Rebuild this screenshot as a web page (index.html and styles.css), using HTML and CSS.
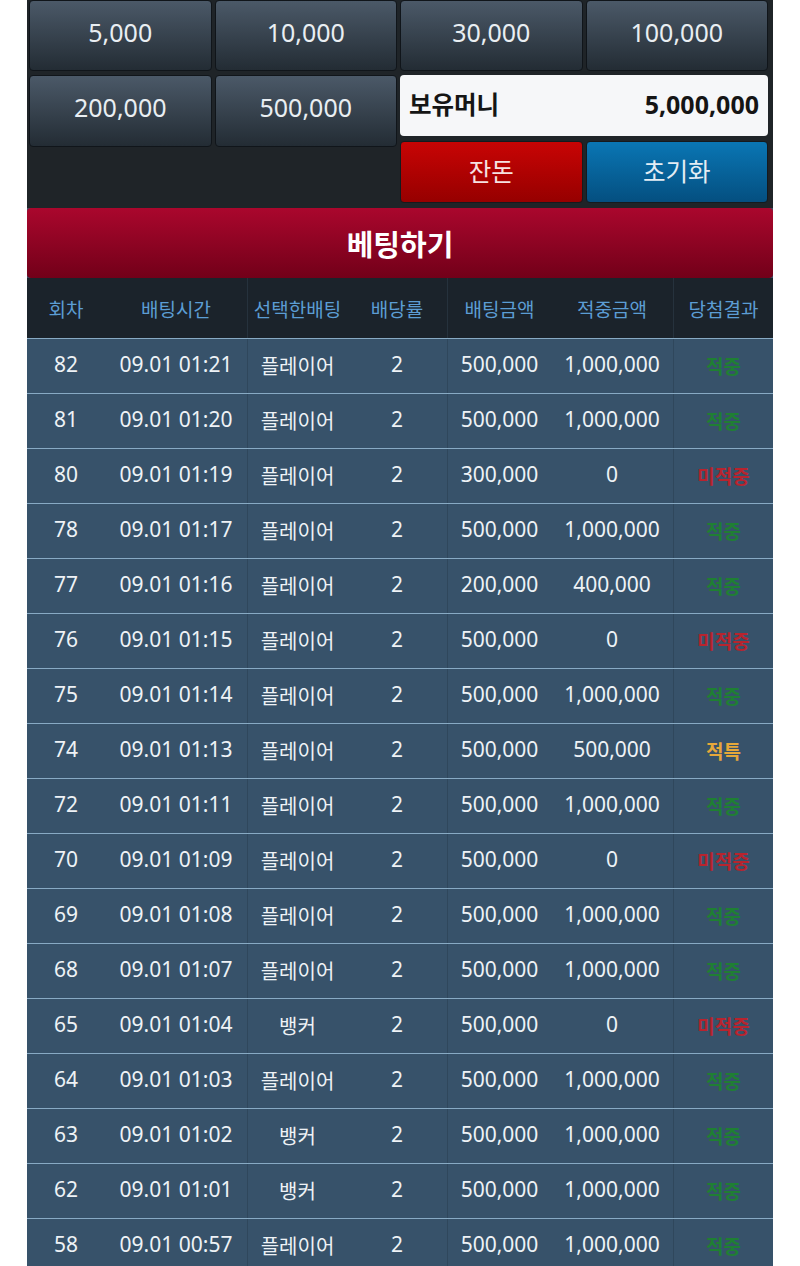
FILE: index.html
```html
<!DOCTYPE html>
<html lang="ko">
<head>
<meta charset="utf-8">
<title>베팅</title>
<link rel="stylesheet" href="styles.css">
</head>
<body>
<div class="wrap">
  <div class="panel">
    <div class="chip">5,000</div>
    <div class="chip">10,000</div>
    <div class="chip">30,000</div>
    <div class="chip">100,000</div>
    <div class="chip tall">200,000</div>
    <div class="chip tall">500,000</div>
    <div class="side">
      <div class="money"><span class="mk">보유머니</span><span class="mv">5,000,000</span></div>
      <div class="act red">잔돈</div>
      <div class="act blue">초기화</div>
    </div>
  </div>
  <div class="bet">베팅하기</div>
  <div class="table">
    <div class="head">
      <div>회차</div><div>배팅시간</div><div class="sep">선택한배팅</div><div>배당률</div><div class="sep">배팅금액</div><div>적중금액</div><div class="sep">당첨결과</div>
    </div>
    <div class="row"><div>82</div><div>09.01 01:21</div><div class="sep k">플레이어</div><div>2</div><div class="sep">500,000</div><div>1,000,000</div><div class="sep res win">적중</div></div>
    <div class="row"><div>81</div><div>09.01 01:20</div><div class="sep k">플레이어</div><div>2</div><div class="sep">500,000</div><div>1,000,000</div><div class="sep res win">적중</div></div>
    <div class="row"><div>80</div><div>09.01 01:19</div><div class="sep k">플레이어</div><div>2</div><div class="sep">300,000</div><div>0</div><div class="sep res lose">미적중</div></div>
    <div class="row"><div>78</div><div>09.01 01:17</div><div class="sep k">플레이어</div><div>2</div><div class="sep">500,000</div><div>1,000,000</div><div class="sep res win">적중</div></div>
    <div class="row"><div>77</div><div>09.01 01:16</div><div class="sep k">플레이어</div><div>2</div><div class="sep">200,000</div><div>400,000</div><div class="sep res win">적중</div></div>
    <div class="row"><div>76</div><div>09.01 01:15</div><div class="sep k">플레이어</div><div>2</div><div class="sep">500,000</div><div>0</div><div class="sep res lose">미적중</div></div>
    <div class="row"><div>75</div><div>09.01 01:14</div><div class="sep k">플레이어</div><div>2</div><div class="sep">500,000</div><div>1,000,000</div><div class="sep res win">적중</div></div>
    <div class="row"><div>74</div><div>09.01 01:13</div><div class="sep k">플레이어</div><div>2</div><div class="sep">500,000</div><div>500,000</div><div class="sep res tie">적특</div></div>
    <div class="row"><div>72</div><div>09.01 01:11</div><div class="sep k">플레이어</div><div>2</div><div class="sep">500,000</div><div>1,000,000</div><div class="sep res win">적중</div></div>
    <div class="row"><div>70</div><div>09.01 01:09</div><div class="sep k">플레이어</div><div>2</div><div class="sep">500,000</div><div>0</div><div class="sep res lose">미적중</div></div>
    <div class="row"><div>69</div><div>09.01 01:08</div><div class="sep k">플레이어</div><div>2</div><div class="sep">500,000</div><div>1,000,000</div><div class="sep res win">적중</div></div>
    <div class="row"><div>68</div><div>09.01 01:07</div><div class="sep k">플레이어</div><div>2</div><div class="sep">500,000</div><div>1,000,000</div><div class="sep res win">적중</div></div>
    <div class="row"><div>65</div><div>09.01 01:04</div><div class="sep k">뱅커</div><div>2</div><div class="sep">500,000</div><div>0</div><div class="sep res lose">미적중</div></div>
    <div class="row"><div>64</div><div>09.01 01:03</div><div class="sep k">플레이어</div><div>2</div><div class="sep">500,000</div><div>1,000,000</div><div class="sep res win">적중</div></div>
    <div class="row"><div>63</div><div>09.01 01:02</div><div class="sep k">뱅커</div><div>2</div><div class="sep">500,000</div><div>1,000,000</div><div class="sep res win">적중</div></div>
    <div class="row"><div>62</div><div>09.01 01:01</div><div class="sep k">뱅커</div><div>2</div><div class="sep">500,000</div><div>1,000,000</div><div class="sep res win">적중</div></div>
    <div class="row"><div>58</div><div>09.01 00:57</div><div class="sep k">플레이어</div><div>2</div><div class="sep">500,000</div><div>1,000,000</div><div class="sep res win">적중</div></div>
  </div>
</div>
</body>
</html>
```

FILE: styles.css
```css
html, body {
  margin: 0;
  padding: 0;
  background: #ffffff;
}
body {
  font-family: "Noto Sans", "Noto Sans CJK KR", sans-serif;
}
.wrap {
  width: 746px;
  margin: 0 auto;
  background: #37526a;
}
.panel {
  background: #1f2428;
  padding: 0 5px 5px 2px;
  display: grid;
  grid-template-columns: repeat(4, 1fr);
  column-gap: 3px;
  row-gap: 4px;
  align-items: start;
}
.chip {
  height: 71px;
  box-sizing: border-box;
  display: flex;
  align-items: center;
  justify-content: center;
  padding-bottom: 8px;
  border: 1px solid #10151a;
  border-radius: 4px;
  background: linear-gradient(#4b5968, #232c34);
  color: #e9eef2;
  font-size: 25px;
}
.chip.tall {
  height: 72px;
}
.side {
  grid-column: 3 / 5;
  display: grid;
  grid-template-columns: 1fr 1fr;
  column-gap: 3px;
  row-gap: 5px;
}
.money {
  grid-column: 1 / 3;
  height: 61px;
  box-sizing: border-box;
  display: flex;
  align-items: center;
  justify-content: space-between;
  padding: 0 9px 4px 9px;
  background: #f6f7f9;
  border-radius: 4px;
  color: #151515;
  font-weight: bold;
}
.mk {
  font-size: 24.5px;
}
.mv {
  font-size: 25px;
}
.act {
  height: 62px;
  box-sizing: border-box;
  display: flex;
  align-items: center;
  justify-content: center;
  padding-bottom: 4px;
  border: 1px solid #151a1e;
  border-radius: 4px;
  font-size: 24.5px;
}
.red {
  background: linear-gradient(#c80404, #960000);
  color: #f6e2e2;
}
.blue {
  background: linear-gradient(#0a76b4, #044f80);
  color: #e4edf4;
}
.bet {
  height: 70px;
  display: flex;
  align-items: center;
  justify-content: center;
  border-radius: 4px;
  background: linear-gradient(#aa072d, #720019);
  color: #ffffff;
  font-size: 29px;
  font-weight: bold;
}
.head, .row {
  display: grid;
  grid-template-columns: 78px 142px 100px 100px 104px 122px 100px;
}
.head {
  height: 60px;
  background: #1b232b;
  color: #5c9dd4;
  font-size: 19px;
}
.row {
  height: 55px;
  box-sizing: border-box;
  border-top: 1px solid #88aac4;
  background: #37526a;
  color: #eef2f6;
  font-size: 21px;
}
.head > div, .row > div {
  display: flex;
  align-items: center;
  justify-content: center;
  white-space: nowrap;
}
.head > div {
  padding-top: 2px;
}
.row > div {
  padding-bottom: 5px;
}
.head > .sep {
  border-left: 1px solid #26323d;
}
.row > .sep {
  border-left: 1px solid #2f475c;
}
.row > .k {
  font-size: 20px;
  padding-bottom: 1px;
}
.row > .res {
  font-size: 19px;
  font-weight: bold;
  padding-bottom: 0;
}
.win {
  color: #1f7f33;
}
.lose {
  color: #b8242e;
}
.tie {
  color: #e6a83a;
  font-weight: normal;
}
```
